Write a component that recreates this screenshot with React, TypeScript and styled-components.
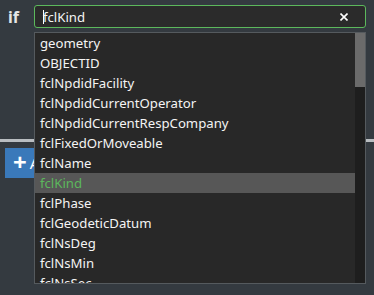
import React from 'react';
import styled, { createGlobalStyle } from 'styled-components';

const FONT = `"Segoe UI", "Noto Sans", "Open Sans", sans-serif`;

const fields = [
    'geometry',
    'OBJECTID',
    'fclNpdidFacility',
    'fclNpdidCurrentOperator',
    'fclNpdidCurrentRespCompany',
    'fclFixedOrMoveable',
    'fclName',
    'fclKind',
    'fclPhase',
    'fclGeodeticDatum',
    'fclNsDeg',
    'fclNsMin',
    'fclNsSec',
];

const GlobalStyle = createGlobalStyle`
    html, body {
        margin: 0;
        padding: 0;
        background: #343a40;
        overflow: hidden;
    }
`;

const Page = styled.div`
    width: 374px;
    height: 295px;
    padding-top: 5px;
    box-sizing: border-box;
    font-family: ${FONT};
    color: #f4f4f4;
`;

const ConditionRow = styled.div`
    display: flex;
    align-items: center;
    padding-right: 8px;
`;

const Keyword = styled.div`
    width: 34px;
    padding-left: 8px;
    box-sizing: border-box;
    font-size: 16px;
    font-weight: 700;
    color: #e6e6e6;
`;

const Combo = styled.div`
    position: relative;
    flex: 1;
`;

const InputBox = styled.div`
    height: 23px;
    display: flex;
    align-items: center;
    border: 1.5px solid #5cb85c;
    border-radius: 3px;
    background: #2b2b2b;
    padding: 0 17px 0 8px;
    box-sizing: border-box;
    font-size: 13.2px;
`;

const Caret = styled.span`
    display: inline-block;
    width: 1px;
    height: 14px;
    background: #ffffff;
    margin-right: -1px;
`;

const InputText = styled.span`
    flex: 1;
    white-space: nowrap;
`;

const ClearButton = styled.span`
    display: flex;
    width: 8px;
    height: 8px;
`;

const Dropdown = styled.div`
    position: absolute;
    top: 27px;
    left: 0;
    right: 0;
    height: 252px;
    display: flex;
    background: #282828;
    border: 1px solid #555a5e;
    box-sizing: border-box;
    overflow: hidden;
`;

const List = styled.div`
    flex: 1;
    overflow: hidden;
`;

const Item = styled.div<{ active?: boolean }>`
    height: 20px;
    line-height: 20px;
    padding-left: 5px;
    font-size: 13.2px;
    white-space: nowrap;
    color: ${props => (props.active ? '#5cb85c' : '#f4f4f4')};
    background: ${props => (props.active ? '#575757' : 'transparent')};
`;

const ScrollTrack = styled.div`
    width: 10px;
    background: #1e1e1e;
`;

const ScrollThumb = styled.div`
    height: 54px;
    background: #6b6b6b;
`;

const Divider = styled.div`
    height: 3px;
    margin-top: 111px;
    background: #b9bdc1;
`;

const AddButton = styled.div`
    display: inline-flex;
    align-items: center;
    gap: 3px;
    height: 30px;
    margin: 6px 0 0 5px;
    padding: 0 8px;
    background: #3a79ba;
    color: #ffffff;
    font-size: 15px;
`;

const Plus = styled.span`
    font-size: 24px;
    font-weight: 700;
    line-height: 1;
    margin-top: -2px;
`;

const App = () => {
    return (
        <Page>
            <GlobalStyle />
            <ConditionRow>
                <Keyword>if</Keyword>
                <Combo>
                    <InputBox>
                        <Caret />
                        <InputText>fclKind</InputText>
                        <ClearButton>
                            <svg width="8" height="8" viewBox="0 0 8 8">
                                <path d="M0.5 0.5L7.5 7.5M7.5 0.5L0.5 7.5" stroke="#ffffff" strokeWidth="1.6" />
                            </svg>
                        </ClearButton>
                    </InputBox>
                    <Dropdown>
                        <List>
                            {fields.map(name => (
                                <Item key={name} active={name === 'fclKind'}>
                                    {name}
                                </Item>
                            ))}
                        </List>
                        <ScrollTrack>
                            <ScrollThumb />
                        </ScrollTrack>
                    </Dropdown>
                </Combo>
            </ConditionRow>
            <Divider />
            <AddButton>
                <Plus>+</Plus>
                Add
            </AddButton>
        </Page>
    );
};

export default App;
